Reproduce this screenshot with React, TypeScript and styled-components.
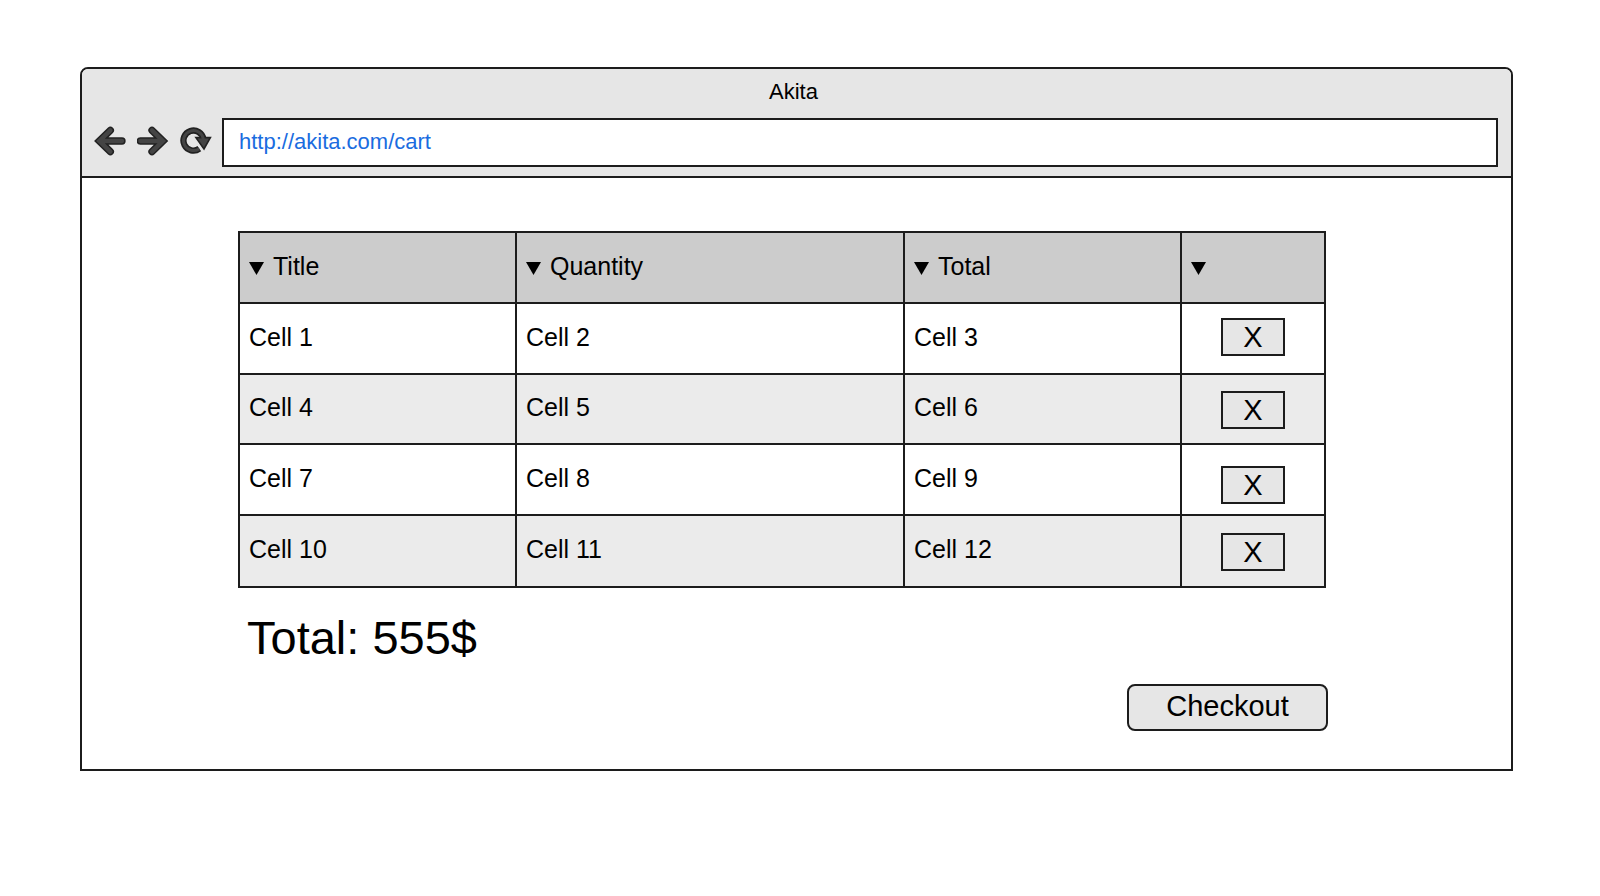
import React from 'react';
import styled, { createGlobalStyle } from 'styled-components';

const ink = '#1c1c1c';

const GlobalStyle = createGlobalStyle`
  *, *::before, *::after { box-sizing: border-box; }
  body {
    margin: 0;
    background: #fff;
    color: #000;
    font-family: "Liberation Sans", Arial, Helvetica, sans-serif;
  }
`;

const Page = styled.div`
  padding: 67px 87px 67px 80px;
`;

const BrowserWindow = styled.div`
  display: flex;
  flex-direction: column;
  border: 2px solid ${ink};
  border-radius: 8px 8px 0 0;
  overflow: hidden;
`;

const Chrome = styled.header`
  background: #e6e6e6;
  border-bottom: 2px solid ${ink};
`;

const WindowTitle = styled.div`
  padding: 1px 6px 0 0;
  margin-bottom: 4px;
  text-align: center;
  font-size: 22px;
  line-height: 44px;
`;

const Toolbar = styled.form`
  display: flex;
  align-items: center;
  gap: 10px;
  padding: 0 13px 9px 12px;
`;

const NavButtons = styled.nav`
  display: flex;
  gap: 11px;
  padding-bottom: 3px;
`;

const NavButton = styled.button`
  display: block;
  padding: 0;
  border: 0;
  background: none;
  cursor: pointer;

  svg {
    display: block;
    width: 32px;
    height: 32px;
  }
`;

const Address = styled.input`
  flex: 1;
  min-width: 0;
  height: 49px;
  padding: 0 15px 1px;
  border: 2px solid ${ink};
  border-radius: 0;
  background: #fff;
  color: #1a6ce0;
  font-family: inherit;
  font-size: 22px;
`;

const Content = styled.main`
  display: flex;
  flex-direction: column;
  padding: 53px 183px 38px 156px;
`;

const CartTable = styled.table`
  width: calc(100% - 3px);
  table-layout: fixed;
  border-collapse: collapse;
  font-size: 25px;
`;

const Column = styled.col<{ $width: number }>`
  width: ${(p) => p.$width}px;
`;

const Row = styled.tr<{ $shaded?: boolean }>`
  height: ${(p) => (p.$shaded ? 70 : 71)}px;
  background: ${(p) => (p.$shaded ? '#ebebeb' : '#fff')};

  &:last-child {
    height: 72px;
  }
`;

const HeadRow = styled.tr`
  height: 71px;
  background: #ccc;
`;

const HeadCell = styled.th`
  padding: 0 9px 3px;
  border: 2px solid ${ink};
  text-align: left;
  font-weight: normal;
`;

const SortLabel = styled.span`
  display: flex;
  align-items: center;
  gap: 9px;

  svg {
    flex: none;
    width: 15px;
    height: 13px;
    margin-top: 4px;
  }
`;

const Cell = styled.td`
  padding: 0 9px 3px;
  border: 2px solid ${ink};
`;

type Placement = 'high' | 'middle' | 'low';

const placementPadding: Record<Placement, string> = {
  high: '0 0 4px',
  middle: '2px 0 0',
  low: '10px 0 0',
};

const ActionCell = styled.td<{ $placement: Placement }>`
  padding: ${(p) => placementPadding[p.$placement]};
  border: 2px solid ${ink};
`;

const BaseButton = styled.button`
  border: 2px solid ${ink};
  background: #e6e6e6;
  color: #000;
  font-family: inherit;
  font-size: 29px;
  line-height: 32px;
  cursor: pointer;
`;

const RemoveButton = styled(BaseButton)`
  display: block;
  width: 64px;
  height: 38px;
  margin: 0 auto;
  padding: 0;
`;

const CartTotal = styled.p`
  margin: 23px 0 19px 9px;
  font-size: 47px;
  line-height: 54px;
`;

const CheckoutButton = styled(BaseButton)`
  align-self: flex-end;
  width: 201px;
  height: 47px;
  padding: 0 0 4px;
  border-radius: 8px;
`;

type CartRow = { cells: string[]; placement: Placement };

const columns = [
  { label: 'Title', width: 277 },
  { label: 'Quantity', width: 388 },
  { label: 'Total', width: 277 },
  { label: '', width: 144 },
];

const rows: CartRow[] = [
  { cells: ['Cell 1', 'Cell 2', 'Cell 3'], placement: 'high' },
  { cells: ['Cell 4', 'Cell 5', 'Cell 6'], placement: 'middle' },
  { cells: ['Cell 7', 'Cell 8', 'Cell 9'], placement: 'low' },
  { cells: ['Cell 10', 'Cell 11', 'Cell 12'], placement: 'middle' },
];

const arrow = 'M49 16 L16 48 L49 80 M18 48 H84';

function ArrowIcon({ forward }: { forward?: boolean }) {
  return (
    <svg viewBox="0 0 96 96" aria-hidden="true">
      <g
        fill="none"
        strokeLinecap="round"
        strokeLinejoin="miter"
        transform={forward ? 'matrix(-1 0 0 1 94 0)' : undefined}
      >
        <path d={arrow} stroke="#222" strokeWidth="22" />
        <path d={arrow} stroke="#444" strokeWidth="13" />
      </g>
    </svg>
  );
}

function ReloadIcon() {
  const arc = 'M58 71 A30 30 0 1 1 70 42';
  const head = 'M48 38 H91 L72 72 Z';
  return (
    <svg viewBox="0 0 96 96" aria-hidden="true">
      <g fill="none">
        <path d={arc} stroke="#222" strokeWidth="19" />
        <path d={head} fill="#444" stroke="#222" strokeWidth="5" />
        <path d={arc} stroke="#444" strokeWidth="9" />
      </g>
    </svg>
  );
}

function SortIcon() {
  return (
    <svg viewBox="0 0 15 13" aria-hidden="true">
      <path d="M0 0 H15 L7.5 13 Z" fill="#000" />
    </svg>
  );
}

export default function App() {
  return (
    <>
      <GlobalStyle />
      <Page>
        <BrowserWindow>
          <Chrome>
            <WindowTitle>Akita</WindowTitle>
            <Toolbar onSubmit={(e) => e.preventDefault()}>
              <NavButtons aria-label="Browser navigation">
                <NavButton type="button" aria-label="Back">
                  <ArrowIcon />
                </NavButton>
                <NavButton type="button" aria-label="Forward">
                  <ArrowIcon forward />
                </NavButton>
                <NavButton type="button" aria-label="Reload">
                  <ReloadIcon />
                </NavButton>
              </NavButtons>
              <Address type="text" aria-label="Address" spellCheck={false} defaultValue="http://akita.com/cart" />
            </Toolbar>
          </Chrome>
          <Content>
            <CartTable>
              <colgroup>
                {columns.map((c, i) => (
                  <Column key={i} $width={c.width} />
                ))}
              </colgroup>
              <thead>
                <HeadRow>
                  {columns.map((c, i) => (
                    <HeadCell key={i} scope="col">
                      <SortLabel>
                        <SortIcon />
                        {c.label}
                      </SortLabel>
                    </HeadCell>
                  ))}
                </HeadRow>
              </thead>
              <tbody>
                {rows.map((row, i) => (
                  <Row key={row.cells[0]} $shaded={i % 2 === 1}>
                    {row.cells.map((text) => (
                      <Cell key={text}>{text}</Cell>
                    ))}
                    <ActionCell $placement={row.placement}>
                      <RemoveButton type="button" aria-label={`X, remove ${row.cells[0]}`}>
                        X
                      </RemoveButton>
                    </ActionCell>
                  </Row>
                ))}
              </tbody>
            </CartTable>
            <CartTotal>Total: 555$</CartTotal>
            <CheckoutButton type="button">Checkout</CheckoutButton>
          </Content>
        </BrowserWindow>
      </Page>
    </>
  );
}
